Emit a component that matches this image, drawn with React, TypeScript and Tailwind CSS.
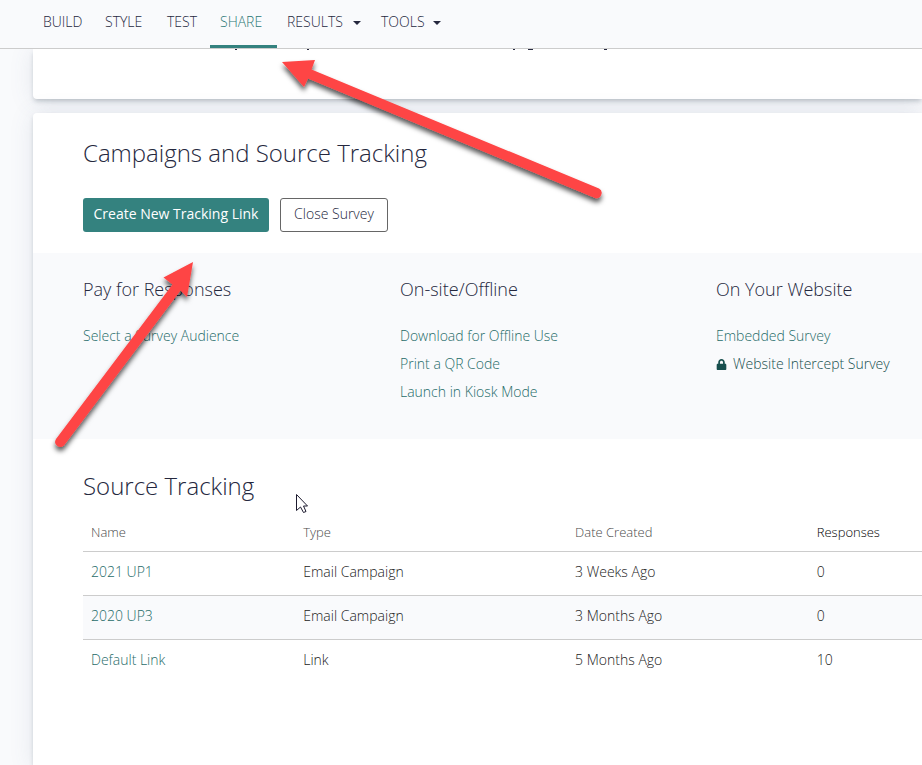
import type { ReactNode } from "react";
import { FaLock } from "react-icons/fa";

const navItems = [
  { label: "BUILD", width: "w-[62px]" },
  { label: "STYLE", width: "w-[62px]" },
  { label: "TEST", width: "w-[53px]" },
  { label: "SHARE", width: "w-[67px]", active: true },
  { label: "RESULTS", width: "w-[94px]", menu: true },
  { label: "TOOLS", width: "w-[80px]", menu: true },
];

const rows = [
  { name: "2021 UP1", type: "Email Campaign", created: "3 Weeks Ago", responses: 0 },
  { name: "2020 UP3", type: "Email Campaign", created: "3 Months Ago", responses: 0 },
  { name: "Default Link", type: "Link", created: "5 Months Ago", responses: 10 },
];

const cardShadow =
  "bg-white shadow-[0_3px_5px_-1px_rgba(50,70,80,0.28),0_2px_24px_rgba(80,90,130,0.13)]";

function Nav() {
  return (
    <header className="relative z-10 border-b border-[#cccccc] bg-[#f9fafc]">
      <nav className="flex h-12 pl-[33px]">
        {navItems.map((item) => {
          const tone = item.active
            ? "border-[#34827f] text-[#2c7875]"
            : "border-transparent text-[#25283e]";
          const body = (
            <>
              {item.label}
              {item.menu && (
                <svg className="mt-0.5 ml-auto" width="8" height="4" viewBox="0 0 8 4" aria-hidden="true">
                  <path d="M0 0h8L4 4z" fill="currentColor" />
                </svg>
              )}
            </>
          );
          const cls = `flex h-12 shrink-0 items-center border-b-[3px] px-2.5 pb-px text-sm ${item.width} ${tone}`;
          return item.menu ? (
            <button key={item.label} type="button" className={cls}>
              {body}
            </button>
          ) : (
            <a key={item.label} href="#" className={cls}>
              {body}
            </a>
          );
        })}
      </nav>
    </header>
  );
}

function Channel({ title, children }: { title: string; children: ReactNode }) {
  return (
    <section>
      <h3 className="text-lg leading-6 text-[#25283e]">{title}</h3>
      <ul className="mt-[21px] flex flex-col text-sm leading-7 whitespace-nowrap text-[#1f6c69]">{children}</ul>
    </section>
  );
}

function Annotations() {
  return (
    <svg
      className="pointer-events-none absolute top-0 left-0 z-20"
      width="640"
      height="540"
      viewBox="0 0 640 540"
      aria-hidden="true"
    >
      <defs>
        <filter id="drop" x="-10%" y="-10%" width="120%" height="130%">
          <feDropShadow dx="0" dy="4" stdDeviation="2.5" floodColor="#000" floodOpacity="0.65" />
        </filter>
      </defs>
      <g fill="#fe4444" filter="url(#drop)">
        <path d="M282 62L315 60L311.500 69.500L599 188.500A5.200 5.200 0 0 1 595 198L308 78.500L304 87Z" />
        <path d="M193 262L187 297L180.500 290.500L64 445.500A5.200 5.200 0 0 1 56 439L172.500 284.500L163.500 277.500Z" />
      </g>
      <path
        d="M296.500 494.500V510.500L300.500 507L303.500 512.500L306 511.500L303.500 506H307.500Z"
        fill="#fff"
        stroke="#1c1a2e"
      />
    </svg>
  );
}

export default function App() {
  return (
    <div className="relative flex min-h-screen flex-col overflow-hidden bg-[#f9fafc] font-['Open_Sans','Noto_Sans',sans-serif] font-light text-[#222]">
      <Nav />
      <main className="flex grow flex-col gap-3.5 pl-[33px]">
        <div className={`h-[50px] rounded-bl-sm ${cardShadow}`}>
          <svg className="block" width="600" height="1" viewBox="0 0 600 1" aria-hidden="true">
            <path d="M202 .5h2M274 .5h2M480 .5h2M495 .5h5M571 .5h3" stroke="#26293f" />
          </svg>
        </div>

        <div className={`grow rounded-tl-sm pb-20 ${cardShadow}`}>
          <div className="pt-6 pl-[50px]">
            <h2 className="text-2xl leading-8 text-[#25283e]">Campaigns and Source Tracking</h2>
            <div className="mt-[29px] flex gap-[11px] text-sm">
              <button
                type="button"
                className="h-[34px] w-[186px] rounded-[3px] bg-[#34827f] pb-0.5 font-normal whitespace-nowrap text-white"
              >
                Create New Tracking Link
              </button>
              <button
                type="button"
                className="h-[34px] w-[108px] rounded-[3px] border border-[#666] bg-white pb-0.5 whitespace-nowrap text-[#25283e]"
              >
                Close Survey
              </button>
            </div>
          </div>

          <div className="mt-[21px] grid h-[186px] grid-cols-[317fr_316fr_206fr] bg-[#f9fafc] pt-6 pl-[50px]">
            <Channel title="Pay for Responses">
              <li><a href="#">Select a Survey Audience</a></li>
            </Channel>
            <Channel title="On-site/Offline">
              <li><a href="#">Download for Offline Use</a></li>
              <li><a href="#">Print a QR Code</a></li>
              <li><a href="#">Launch in Kiosk Mode</a></li>
            </Channel>
            <Channel title="On Your Website">
              <li><a href="#">Embedded Survey</a></li>
              <li>
                <a href="#" className="flex items-center gap-1.5 text-[#174f4e]">
                  <FaLock size={11} aria-hidden="true" />
                  Website Intercept Survey
                </a>
              </li>
            </Channel>
          </div>

          <div className="pt-[31px] pl-[50px]">
            <h2 className="text-2xl leading-8 text-[#25283e]">Source Tracking</h2>
            <table className="mt-[13px] w-full table-fixed border-collapse text-left text-sm">
              <colgroup>
                <col className="w-[25.3%]" />
                <col className="w-[32.4%]" />
                <col className="w-[28.8%]" />
                <col />
              </colgroup>
              <thead>
                <tr className="h-9 border-b border-[#cccccc] text-[13px] text-[#4a4a4a]">
                  <th scope="col" className="px-2 font-light">Name</th>
                  <th scope="col" className="px-2 font-light">Type</th>
                  <th scope="col" className="px-2 font-light">Date Created</th>
                  <th scope="col" className="px-2 font-light text-black">Responses</th>
                </tr>
              </thead>
              <tbody>
                {rows.map((row) => (
                  <tr
                    key={row.name}
                    className="h-11 border-b border-[#cccccc] last:border-b-0 even:bg-[#f9fafc]"
                  >
                    <td className="px-2 pb-0.5"><a href="#" className="text-[#1f6c69]">{row.name}</a></td>
                    <td className="px-2 pb-0.5">{row.type}</td>
                    <td className="px-2 pb-0.5">{row.created}</td>
                    <td className="px-2 pb-0.5">{row.responses}</td>
                  </tr>
                ))}
              </tbody>
            </table>
          </div>
        </div>
      </main>
      <Annotations />
    </div>
  );
}
